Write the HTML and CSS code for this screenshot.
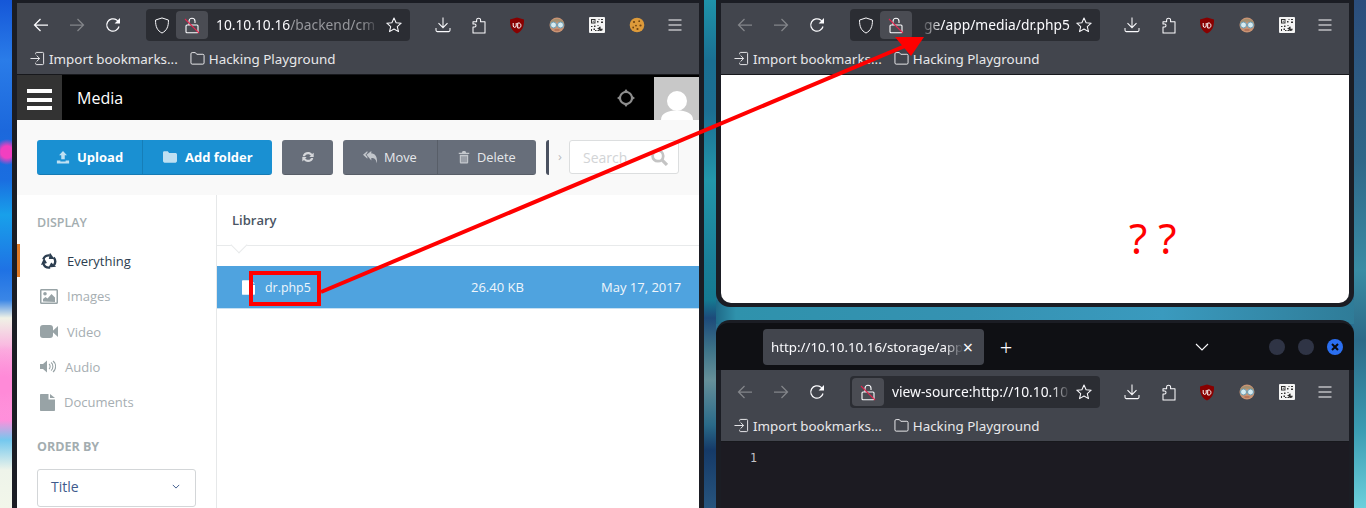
FILE: index.html
```html
<!DOCTYPE html>
<html lang="en">
<head>
<meta charset="utf-8">
<title>Media</title>
<link rel="stylesheet" href="styles.css">
</head>
<body>
<svg class="defs" aria-hidden="true">
  <symbol id="i-back" viewBox="0 0 16 16"><path d="M15 8H1.500M7.500 2 1.500 8l6 6" fill="none" stroke="currentColor" stroke-width="1.250"/></symbol>
  <symbol id="i-fwd" viewBox="0 0 16 16"><path d="M1 8h13.500M8.500 2l6 6-6 6" fill="none" stroke="currentColor" stroke-width="1.250"/></symbol>
  <symbol id="i-reload" viewBox="0 0 16 16"><path d="M14 9.500A6.200 6.200 0 1 1 11.800 3.100L14 5.200" fill="none" stroke="currentColor" stroke-width="1.250"/><path d="M15 1v5.400H9.600z" fill="currentColor"/></symbol>
  <symbol id="i-shield" viewBox="0 0 16 18"><path d="M8 1 14.800 3.200c.2 7-1.800 11.300-6.800 13.800C3 14.500 1 10.200 1.200 3.200z" fill="none" stroke="currentColor" stroke-width="1.050" stroke-linejoin="round"/></symbol>
  <symbol id="i-lock" viewBox="0 0 16 17"><path d="M5 8V4.200a3 3 0 0 1 6 0V6" fill="none" stroke="currentColor" stroke-width="1.100"/><rect x="2" y="8" width="12" height="7.800" rx="1" fill="none" stroke="currentColor" stroke-width="1.100"/><path d="M1 2 15 16" stroke="#e2264f" stroke-width="1.100"/></symbol>
  <symbol id="i-star" viewBox="0 0 16 16"><path d="m8 1 2.100 4.700 5.100.5-3.900 3.400 1.200 5L8 12l-4.500 2.600 1.200-5L.8 6.200l5.100-.5z" fill="none" stroke="currentColor" stroke-width="1.050" stroke-linejoin="round"/></symbol>
  <symbol id="i-dl" viewBox="0 0 16 16"><path d="M8 .5v10.200M3.500 6.200 8 10.700l4.500-4.500M1 11v2.300c0 .8.500 1.300 1.300 1.300h11.400c.8 0 1.300-.5 1.300-1.300V11" fill="none" stroke="currentColor" stroke-width="1.050"/></symbol>
  <symbol id="i-puzzle" viewBox="0 0 16 17"><path d="M2 16V10h1.800c1.600 0 1.600-3 0-3H2V4.800h3.600V3c0-2.400 4-2.400 4 0v1.800h4.400V16z" fill="none" stroke="currentColor" stroke-width="1.050" stroke-linejoin="round"/></symbol>
  <symbol id="i-menu" viewBox="0 0 16 16"><path d="M1.500 3h13M1.500 8h13M1.500 13h13" stroke="currentColor" stroke-width="1.100"/></symbol>
  <symbol id="i-import" viewBox="0 0 16 16"><path d="M6 3.500V2.500c0-.6.400-1 1-1h6.500c.6 0 1 .4 1 1v11c0 .6-.4 1-1 1H7c-.6 0-1-.4-1-1v-1" fill="none" stroke="currentColor" stroke-width="1"/><path d="M.5 8H10M7 4.800 10.300 8 7 11.200" fill="none" stroke="currentColor" stroke-width="1"/></symbol>
  <symbol id="i-folder" viewBox="0 0 16 16"><path d="M1 3c0-.8.500-1.300 1.300-1.300h3.400L7.200 3.500h6.500c.8 0 1.300.5 1.300 1.300v7.900c0 .8-.5 1.300-1.300 1.300H2.300C1.500 14 1 13.500 1 12.700z" fill="none" stroke="currentColor" stroke-width="1"/></symbol>
  <symbol id="i-ublock" viewBox="0 0 16 17"><path d="M8 .5 15 2.500c.3 7-1.800 11.500-7 14C2.800 14 .7 9.500 1 2.500z" fill="#800"/><path d="M4.200 6v3c0 1.800 3 1.800 3 0V6M8.700 6v5h1.200c2.700 0 2.700-5 0-5z" fill="none" stroke="#fff" stroke-width="1"/></symbol>
  <symbol id="i-face" viewBox="0 0 16 16"><circle cx="8" cy="8" r="7.500" fill="#c99373"/><path d="M.8 6.500C2 .5 14 .5 15.200 6.500 11 4 5 4 .8 6.500z" fill="#a39070"/><circle cx="4.500" cy="8" r="3" fill="#d6ecf2" stroke="#6a9cb2"/><circle cx="11.500" cy="8" r="3" fill="#d6ecf2" stroke="#6a9cb2"/><path d="M5.500 13h5" stroke="#a45f4a" stroke-width="1.100"/></symbol>
  <symbol id="i-qr" viewBox="0 0 16 16"><rect width="16" height="16" rx="1" fill="#f4f4f4"/><path d="M2 2h4.500v4.500H2zm1 1v2.500h2.500V3zM3.700 3.700h1.100v1.100H3.700zM9.500 2h1v1h-1zM12 2h2v1h-2zM12 4.500h2V6h-2zM8 4h1.500v1.500H8zM2 9h1.500v1H2zM5 8.500h1.500v1.500H5zM2 12h1v2H2zM4.500 11.500H6V13H4.500zM6 13h1.500v1H6zM8.500 8h1v1h-1zM8.500 11h1.500v1h-1.500zM8.500 13H10v1H8.500z" fill="#333" fill-rule="evenodd"/><path d="M13.800 11.800a2.200 2.200 0 1 1-2.200-2.200v2.200z" fill="#333"/></symbol>
  <symbol id="i-cookie" viewBox="0 0 16 16"><circle cx="8" cy="8" r="7.300" fill="#dd9a3a"/><g fill="#6e4312"><circle cx="5" cy="5" r="1.100"/><circle cx="10.200" cy="4.200" r=".9"/><circle cx="11.500" cy="8.500" r="1.100"/><circle cx="7" cy="8.600" r=".9"/><circle cx="4.200" cy="10.500" r=".9"/><circle cx="8.500" cy="12" r="1.100"/></g></symbol>
  <symbol id="i-upload" viewBox="0 0 16 16"><path d="M8 1 12.500 6H10v4.500H6V6H3.500zM1 12h4v1h6v-1h4v3.500H1z" fill="currentColor"/></symbol>
  <symbol id="i-ffolder" viewBox="0 0 16 14"><path d="M0 2.300C0 1 .8.500 1.800.500h3.700L7 2.500h7.200c1 0 1.800.7 1.800 1.700v7.500c0 1-.8 1.800-1.800 1.800H1.800C.8 13.500 0 12.700 0 11.700z" fill="currentColor"/></symbol>
  <symbol id="i-refresh" viewBox="0 0 16 16"><path d="M2 7C2.500 2.500 9.500.5 12.600 4.500L14.500 3v5H9.500l1.700-1.800C9.200 3.800 5 4.500 4.700 7zM14 9c-.5 4.500-7.500 6.500-10.600 2.500L1.500 13V8h5L4.800 9.800C6.800 12.200 11 11.500 11.300 9z" fill="currentColor"/></symbol>
  <symbol id="i-reply" viewBox="0 0 16 16"><path d="M5 1v2.200L2.800 5.500 5 7.800V10L0 5.500zM9.500 1v3C13.500 4 16 7 16 12.500c0 .8-.1 1.500-.3 2.500-.7-4.500-2.500-6-6.200-6v3L4 5.500z" fill="currentColor"/></symbol>
  <symbol id="i-trash" viewBox="0 0 16 16"><path d="M2 3h3.500L6.500 1h3l1 2H14v1.500H2zM3.200 5.500h9.600V14c0 1-.6 1.500-1.500 1.500H4.700c-.9 0-1.500-.5-1.500-1.500zm2 1.500v7h1V7zm2.300 0v7h1V7zm2.300 0v7h1V7z" fill="currentColor" fill-rule="evenodd"/></symbol>
  <symbol id="i-recycle" viewBox="0 0 18 18"><g id="rc-arm"><path d="M2.900 6.800A6.500 6.500 0 0 1 9.800 2.600" fill="none" stroke="currentColor" stroke-width="2.500"/><path d="M10 -.3 14.800 6.300 8.800 6.400z" fill="currentColor"/></g><use href="#rc-arm" transform="rotate(120 9 9)"/><use href="#rc-arm" transform="rotate(240 9 9)"/></symbol>
  <symbol id="i-image" viewBox="0 0 18 15"><path d="M0 1.500C0 .6.600 0 1.500 0h15c.9 0 1.500.6 1.500 1.500v12c0 .9-.6 1.500-1.500 1.500h-15C.6 15 0 14.400 0 13.500zm1.500 0v12h15v-12zM5 3a1.800 1.800 0 1 1 0 3.600A1.800 1.800 0 0 1 5 3zM3 12.500V10l2.500-2 2 1.500 4-4.500 3.500 3.500v4.500z" fill="currentColor" fill-rule="evenodd"/></symbol>
  <symbol id="i-video" viewBox="0 0 18 13"><rect width="13" height="13" rx="3" fill="currentColor"/><path d="M12 6.500 18 1v11z" fill="currentColor"/></symbol>
  <symbol id="i-audio" viewBox="0 0 16 14"><path d="M0 4.500h3L7 1v12L3 9.500H0z" fill="currentColor"/><path d="M9 4.500c1.500 1 1.500 4 0 5M11 3c2.500 1.500 2.500 6.500 0 8M13 1.500c3.500 2.500 3.500 8.500 0 11" fill="none" stroke="currentColor" stroke-width="1.100"/></symbol>
  <symbol id="i-doc" viewBox="0 0 15 17"><path d="M0 1C0 .4.400 0 1 0h7.500v5.500H15V16c0 .6-.4 1-1 1H1c-.6 0-1-.4-1-1zM10 0l5 4h-5z" fill="currentColor"/></symbol>
  <symbol id="i-search" viewBox="0 0 16 16"><circle cx="6.500" cy="6.500" r="5" fill="none" stroke="currentColor" stroke-width="2.600"/><path d="m10.500 10.500 4.500 4.500" stroke="currentColor" stroke-width="3"/></symbol>
  <symbol id="i-target" viewBox="0 0 18 18"><circle cx="9" cy="9" r="6" fill="none" stroke="currentColor" stroke-width="2.100"/><path d="M9 0l3 4H6zM9 18l3-4H6zM0 9l4-3v6zM18 9l-4-3v6z" fill="currentColor"/></symbol>
  <symbol id="i-person" viewBox="0 0 45 43"><circle cx="23" cy="24" r="10" fill="#fff"/><path d="M7 43c0-7 7-9.500 16-9.500S39 36 39 43z" fill="#fff"/></symbol>
</svg>

<main class="desktop">

  <section class="win win-left">
    <div class="toolbar">
      <div class="nav">
        <span class="tb"><svg class="ic16"><use href="#i-back"/></svg></span>
        <span class="tb dim"><svg class="ic16"><use href="#i-fwd"/></svg></span>
        <span class="tb"><svg class="ic16"><use href="#i-reload"/></svg></span>
        <div class="urlbar urlbar-left">
          <span class="shield"><svg class="ic-tall"><use href="#i-shield"/></svg></span>
          <span class="lockbox"><svg class="ic-tall"><use href="#i-lock"/></svg></span>
          <span class="url fade-end"><b>10.10.10.16</b><i>/backend/cm</i></span>
          <span class="star"><svg class="ic16"><use href="#i-star"/></svg></span>
        </div>
        <div class="exts">
          <span class="ext e-dl"><svg class="ic16"><use href="#i-dl"/></svg></span>
          <span class="ext e-pz"><svg class="ic-tall"><use href="#i-puzzle"/></svg></span>
          <span class="ext e-ub"><svg class="ic-tall"><use href="#i-ublock"/></svg></span>
          <span class="ext e-fc"><svg class="ic16"><use href="#i-face"/></svg></span>
          <span class="ext e-qr"><svg class="ic16"><use href="#i-qr"/></svg></span>
          <span class="ext e-ck"><svg class="ic16"><use href="#i-cookie"/></svg></span>
          <span class="ext e-mn"><svg class="ic16"><use href="#i-menu"/></svg></span>
        </div>
      </div>
      <div class="bookmarks">
        <svg class="ic15"><use href="#i-import"/></svg><span>Import bookmarks...</span>
        <svg class="ic15 bm-folder"><use href="#i-folder"/></svg><span>Hacking Playground</span>
      </div>
    </div>

    <div class="media">
      <header class="m-head">
        <span class="burger"><i></i><i></i><i></i></span>
        <h1 class="m-title">Media</h1>
        <svg class="m-target"><use href="#i-target"/></svg>
        <span class="avatar"><svg class="avatar-img"><use href="#i-person"/></svg></span>
      </header>

      <div class="m-tools">
        <div class="btn-group blue">
          <button class="btn b-upload"><svg class="bi"><use href="#i-upload"/></svg>Upload</button>
          <button class="btn b-folder"><svg class="bi"><use href="#i-ffolder"/></svg>Add folder</button>
        </div>
        <div class="btn-group gray"><button class="btn b-refresh"><svg class="bi"><use href="#i-refresh"/></svg></button></div>
        <div class="btn-group gray light">
          <button class="btn b-move"><svg class="bi"><use href="#i-reply"/></svg>Move</button>
          <button class="btn b-delete"><svg class="bi"><use href="#i-trash"/></svg>Delete</button>
        </div>
        <span class="sliver"></span>
        <span class="crumb">›</span>
        <div class="search"><span>Search</span><svg class="s-ic"><use href="#i-search"/></svg></div>
      </div>

      <div class="m-body">
        <aside class="side">
          <h2 class="side-h">DISPLAY</h2>
          <ul class="side-list">
            <li class="side-item active"><svg class="si si-18"><use href="#i-recycle"/></svg>Everything</li>
            <li class="side-item"><svg class="si si-18"><use href="#i-image"/></svg>Images</li>
            <li class="side-item"><svg class="si si-18"><use href="#i-video"/></svg>Video</li>
            <li class="side-item"><svg class="si si-16"><use href="#i-audio"/></svg>Audio</li>
            <li class="side-item"><svg class="si si-15"><use href="#i-doc"/></svg>Documents</li>
          </ul>
          <h2 class="side-h order">ORDER BY</h2>
          <div class="select"><span>Title</span><svg class="chev" viewBox="0 0 10 6"><path d="M1 1l4 4 4-4" fill="none" stroke="currentColor" stroke-width="1.200"/></svg></div>
        </aside>
        <section class="lib">
          <h2 class="lib-h">Library</h2>
          <div class="row">
            <svg class="row-doc"><use href="#i-doc"/></svg>
            <span class="row-name">dr.php5</span>
            <span class="row-size">26.40 KB</span>
            <span class="row-date">May 17, 2017</span>
          </div>
        </section>
      </div>
    </div>
  </section>

  <section class="win win-top">
    <div class="toolbar">
      <div class="nav">
        <span class="tb dim"><svg class="ic16"><use href="#i-back"/></svg></span>
        <span class="tb dim"><svg class="ic16"><use href="#i-fwd"/></svg></span>
        <span class="tb"><svg class="ic16"><use href="#i-reload"/></svg></span>
        <div class="urlbar">
          <span class="shield"><svg class="ic-tall"><use href="#i-shield"/></svg></span>
          <span class="lockbox"><svg class="ic-tall"><use href="#i-lock"/></svg></span>
          <span class="url url-end fade-start"><b>ge/app/media/dr.php5</b></span>
          <span class="star"><svg class="ic16"><use href="#i-star"/></svg></span>
        </div>
        <div class="exts">
          <span class="ext e-dl"><svg class="ic16"><use href="#i-dl"/></svg></span>
          <span class="ext e-pz"><svg class="ic-tall"><use href="#i-puzzle"/></svg></span>
          <span class="ext e-ub"><svg class="ic-tall"><use href="#i-ublock"/></svg></span>
          <span class="ext e-fc"><svg class="ic16"><use href="#i-face"/></svg></span>
          <span class="ext e-qr"><svg class="ic16"><use href="#i-qr"/></svg></span>
          <span class="ext e-mn"><svg class="ic16"><use href="#i-menu"/></svg></span>
        </div>
      </div>
      <div class="bookmarks">
        <svg class="ic15"><use href="#i-import"/></svg><span>Import bookmarks...</span>
        <svg class="ic15 bm-folder"><use href="#i-folder"/></svg><span>Hacking Playground</span>
      </div>
    </div>
    <div class="blank"></div>
  </section>

  <section class="win win-bottom">
    <div class="tabbar">
      <div class="tab"><span class="tab-title">http://10.10.10.16/storage/app</span><span class="tab-x">×</span></div>
      <span class="tab-new">+</span>
      <svg class="tab-list" viewBox="0 0 14 8"><path d="M1 1l6 6 6-6" fill="none" stroke="currentColor" stroke-width="1.100"/></svg>
      <span class="wbtn"></span><span class="wbtn"></span>
      <span class="wbtn close"><svg viewBox="0 0 10 10"><path d="M2 2l6 6M8 2l-6 6" stroke="#0a0a0a" stroke-width="2"/></svg></span>
    </div>
    <div class="toolbar">
      <div class="nav">
        <span class="tb dim"><svg class="ic16"><use href="#i-back"/></svg></span>
        <span class="tb dim"><svg class="ic16"><use href="#i-fwd"/></svg></span>
        <span class="tb"><svg class="ic16"><use href="#i-reload"/></svg></span>
        <div class="urlbar urlbar-src">
          <span class="lockbox"><svg class="ic-tall"><use href="#i-lock"/></svg></span>
          <span class="url fade-end"><b>view-source:http://10.10.10</b></span>
          <span class="star"><svg class="ic16"><use href="#i-star"/></svg></span>
        </div>
        <div class="exts">
          <span class="ext e-dl"><svg class="ic16"><use href="#i-dl"/></svg></span>
          <span class="ext e-pz"><svg class="ic-tall"><use href="#i-puzzle"/></svg></span>
          <span class="ext e-ub"><svg class="ic-tall"><use href="#i-ublock"/></svg></span>
          <span class="ext e-fc"><svg class="ic16"><use href="#i-face"/></svg></span>
          <span class="ext e-qr"><svg class="ic16"><use href="#i-qr"/></svg></span>
          <span class="ext e-mn"><svg class="ic16"><use href="#i-menu"/></svg></span>
        </div>
      </div>
      <div class="bookmarks">
        <svg class="ic15"><use href="#i-import"/></svg><span>Import bookmarks...</span>
        <svg class="ic15 bm-folder"><use href="#i-folder"/></svg><span>Hacking Playground</span>
      </div>
    </div>
    <div class="source"><span class="line-no">1</span></div>
  </section>

  <div class="qq">? ?</div>

  <svg class="marks" viewBox="0 0 1366 508" aria-hidden="true">
    <rect x="251" y="273" width="68" height="31" fill="none" stroke="#f00" stroke-width="4"/>
    <path d="M321 292 905 46" stroke="#f00" stroke-width="4"/>
    <path d="M924 37 895 37 911 56z" fill="#f00"/>
  </svg>
</main>
</body>
</html>
```

FILE: styles.css
```css
* { box-sizing: border-box; }
html, body { margin: 0; padding: 0; }
body { width: 1366px; height: 508px; overflow: hidden; font-family: "Noto Sans", sans-serif; }
.defs { position: absolute; width: 0; height: 0; }
h1, h2, ul { margin: 0; padding: 0; font: inherit; list-style: none; }
button { font: inherit; border: 0; color: inherit; background: none; padding: 0; }

.desktop {
  position: relative;
  width: 1366px;
  height: 508px;
  overflow: hidden;
  background-color: #2a6f90;
  background-image:
    radial-gradient(circle at 7px 152px, #f23fc0 0 6px, transparent 13px),
    radial-gradient(circle at 4px 385px, #ff8ad8 0 8px, transparent 40px),
    linear-gradient(180deg, #1557d8 0, #2a7ce8 60px, #1c68dc 130px, #1a6ee0 180px, #18a0ea 215px, #1f72e4 270px, #3a86e6 300px, #f0f2e6 318px, #fbb0e0 350px, #ff90dc 420px, #74c8ee 440px, #eef4ea 470px, #f2f6ea 508px),
    linear-gradient(180deg, #1f93aa 0, #1a6f92 60px, #1c6e92 110px, #2397aa 180px, #1a7f98 260px, #157a92 300px, #1d4a7a 318px, #3e7488 350px, #66909a 380px, #2a6a88 425px, #153a68 450px, #27557e 508px),
    linear-gradient(90deg, #1f6a88 0, #2f92ac 20px, #3592b2 40%, #3a9abe 70%, #2f7c98 100%),
    linear-gradient(180deg, #2b4d7c 0, #2f6788 160px, #3a8ca4 270px, #2c6a88 340px, #3b9cb2 430px, #6cd0dc 508px);
  background-repeat: no-repeat;
  background-position: 0 0, 0 0, 0 0, 704px 0, 716px 300px, 1354px 0;
  background-size: 12px 508px, 12px 508px, 12px 508px, 12px 508px, 638px 24px, 12px 508px;
}

/* windows on the desktop */
.win { position: absolute; background: #1b1d24; display: flex; flex-direction: column; }
.win-left { left: 12px; top: 0; width: 692px; height: 508px; padding: 3px 5px 0; }
.win-top { left: 716px; top: 0; width: 638px; height: 307px; padding: 3px 5px 4px; border-radius: 0 0 14px 14px; }
.win-bottom { left: 716px; top: 320px; width: 638px; height: 188px; padding: 3px 5px 0; border-radius: 14px 14px 0 0; }

/* browser chrome */
.toolbar { flex: none; height: 72px; background: #42454d; border-bottom: 1px solid #17181c; color: #fbfbfe; }
.nav { display: flex; align-items: center; height: 40px; padding: 4px 0 0 6px; }
.tb { width: 36px; height: 32px; display: flex; align-items: center; justify-content: center; flex: none; }
.tb.dim { color: #83858a; }
.ic16 { width: 16px; height: 16px; display: block; }
.ic-tall { width: 16px; height: 17px; display: block; }
.ic15 { width: 15px; height: 15px; display: block; flex: none; }
.urlbar { display: flex; align-items: center; width: 250px; height: 32px; margin-left: 15px; background: #2b2d33; border-radius: 4px; flex: none; }
.urlbar-left { width: 264px; }
.shield { width: 30px; padding-left: 8px; flex: none; }
.lockbox { width: 32px; height: 28px; background: #4a4c53; border-radius: 4px; display: flex; align-items: center; justify-content: center; flex: none; }
.urlbar-src .lockbox { margin-left: 2px; }
.url { flex: 1; min-width: 0; margin: 0 4px 0 8px; font-size: 13.8px; white-space: nowrap; overflow: hidden; display: flex; line-height: 20px; }
.url b { font-weight: 400; color: #fbfbfe; flex: none; }
.url i { font-style: normal; color: #96979c; flex: none; }
.url-end { justify-content: flex-end; }
.fade-end { -webkit-mask-image: linear-gradient(90deg, #000 calc(100% - 18px), transparent); mask-image: linear-gradient(90deg, #000 calc(100% - 18px), transparent); }
.fade-start { -webkit-mask-image: linear-gradient(90deg, transparent 0, #000 22px); mask-image: linear-gradient(90deg, transparent 0, #000 22px); }
.star { width: 20px; margin-right: 6px; padding-left: 2px; flex: none; }
.exts { display: flex; align-items: center; margin-left: 13px; flex: none; }
.ext { height: 32px; display: flex; align-items: center; justify-content: center; flex: none; }
.e-dl, .e-pz, .e-mn { width: 37px; }
.e-ub, .e-qr { width: 39px; }
.e-fc, .e-ck { width: 41px; }
.win-left .exts { margin-left: 15px; }
.win-left .e-dl, .win-left .e-pz, .win-left .e-mn { width: 36px; }
.win-left .e-ub, .win-left .e-fc, .win-left .e-qr, .win-left .e-ck { width: 40px; }
.bookmarks { display: flex; align-items: center; height: 31px; padding-left: 13px; font-size: 13.4px; color: #e8e8ea; }
.bookmarks svg { color: #f0f0f2; }
.bookmarks span { margin-left: 4px; }
.bm-folder { margin-left: 12px; }

/* media manager */
.media { flex: 1; min-height: 0; background: #fff; font-family: "Open Sans", sans-serif; overflow: hidden; display: flex; flex-direction: column; }
.m-head { display: flex; align-items: center; height: 45px; background: #000; flex: none; }
.burger { width: 45px; height: 45px; background: #333; display: flex; flex-direction: column; gap: 4.500px; padding: 14px 10px 0; flex: none; }
.burger i { display: block; height: 4px; background: #fff; }
.m-title { margin-left: 15px; color: #fff; font-size: 16px; font-weight: 400; }
.m-target { width: 18px; height: 18px; margin-left: auto; margin-right: 19px; color: #8d8d8d; }
.avatar { width: 45px; height: 43px; margin-top: 2px; background: #c8c8c8; flex: none; overflow: hidden; }
.avatar-img { width: 45px; height: 43px; display: block; }

.m-tools { display: flex; align-items: flex-start; height: 75px; padding: 20px 0 0 20px; background: #f9f9f9; flex: none; }
.btn-group { display: flex; height: 35px; border-radius: 3px; overflow: hidden; flex: none; margin-right: 10px; border-bottom: 1px solid rgba(0,0,0,.14); }
.btn { display: flex; align-items: center; height: 100%; flex: none; font-size: 13px; }
.blue { background: #1a90d2; color: #fff; font-weight: 700; }
.gray { background: #676e7a; color: #fff; }
.gray.light { color: #e6e8eb; }
.bi { width: 14px; height: 14px; flex: none; opacity: .72; }
.b-upload { width: 106px; padding-left: 19px; gap: 7px; border-right: 1px solid rgba(0,0,0,.12); }
.b-folder { width: 129px; padding-left: 20px; gap: 8px; }
.b-refresh { width: 51px; justify-content: center; }
.b-move { width: 95px; padding-left: 20px; gap: 7px; border-right: 1px solid rgba(0,0,0,.14); font-size: 12.8px; }
.b-delete { width: 98px; padding-left: 19px; gap: 6px; font-size: 12.8px; }
.sliver { width: 3px; height: 35px; background: #4a5160; border-radius: 3px 0 0 3px; flex: none; }
.crumb { width: 20px; height: 35px; padding-left: 9px; line-height: 33px; color: #b9bcc0; font-size: 13px; flex: none; }
.search { display: flex; align-items: center; width: 110px; height: 34px; padding-left: 13px; background: #fff; border: 1px solid #dcdedf; border-radius: 3px; color: #d2d4d6; font-size: 14px; flex: none; }
.s-ic { width: 17px; height: 17px; margin-left: auto; margin-right: 10px; color: #c4c4c4; }

.m-body { display: flex; flex: 1; min-height: 0; }
.side { width: 200px; flex: none; padding-top: 21px; border-right: 1px solid #e6e8e9; }
.side-h { height: 14px; line-height: 14px; padding-left: 20px; color: #a3adb0; font-size: 12.500px; font-weight: 600; }
.side-list { margin-top: 13.4px; }
.side-item { display: flex; align-items: center; gap: 9px; height: 35.250px; padding-left: 23px; font-size: 13px; color: #a6aeb2; }
.side-item.active { color: #2c3e50; background: linear-gradient(#e07b28, #e07b28) 0 1px / 3px 33px no-repeat; }
.si { height: 17px; flex: none; color: #98a3a6; }
.active .si { color: #2c3e50; }
.si-18 { width: 18px; }
.si-16 { width: 16px; }
.si-15 { width: 15px; }
.order { margin-top: 20px; font-weight: 700; }
.select { display: flex; align-items: center; justify-content: space-between; width: 159px; height: 38px; margin: 15px 0 0 20px; padding: 0 15px 2px 13px; border: 1px solid #d3d6d8; border-radius: 3px; color: #3e5a8c; font-size: 14px; }
.chev { width: 8px; height: 5px; }

.lib { flex: 1; min-width: 0; position: relative; }
.lib-h { height: 51px; padding: 17px 0 0 15px; line-height: 16px; border-bottom: 1px solid #e8eaeb; color: #4a5564; font-size: 13px; font-weight: 600; position: relative; }
.lib-h::after { content: ""; position: absolute; left: 16px; bottom: -6px; width: 11px; height: 11px; background: #fff; border-right: 1px solid #e8eaeb; border-bottom: 1px solid #e8eaeb; transform: rotate(45deg); }
.row { display: flex; align-items: center; height: 43px; margin-top: 20px; background: #4fa3df; border-bottom: 1px solid #c7e0f2; color: #f0f6fb; font-size: 13px; }
.row-doc { width: 13px; height: 17px; margin-left: 25px; color: #fff; flex: none; }
.row-name { flex: 1; margin-left: 10px; font-size: 12.4px; }
.row-size { width: 130px; }
.row-date { width: 81px; margin-right: 17px; white-space: nowrap; }

/* second and third windows */
.blank { flex: 1; background: #fff; border-radius: 0 0 10px 10px; }
.tabbar { display: flex; align-items: center; height: 47px; margin: 0 -5px; padding: 0 0 0 47px; background: #0f1014; border-radius: 12px 12px 0 0; flex: none; color: #fbfbfe; }
.tab { display: flex; align-items: center; width: 221px; height: 36px; padding: 0 8px; background: #42454d; border-radius: 4px; font-size: 13.3px; flex: none; }
.tab-title { flex: none; width: 192px; margin-right: -3px; white-space: nowrap; overflow: hidden; -webkit-mask-image: linear-gradient(90deg, #000 calc(100% - 18px), transparent); mask-image: linear-gradient(90deg, #000 calc(100% - 18px), transparent); }
.tab-x { width: 16px; text-align: center; font-size: 18px; line-height: 18px; flex: none; }
.tab-new { margin-left: 14px; width: 16px; font-size: 22px; font-weight: 300; line-height: 22px; text-align: center; }
.tab-list { width: 14px; height: 8px; margin-left: 181px; }
.wbtn { width: 16px; height: 16px; border-radius: 50%; background: #2f3445; margin-left: 13px; flex: none; }
.tab-list + .wbtn { margin-left: 60px; }
.wbtn.close { background: #2b6ff0; padding: 3px; }
.wbtn.close svg { display: block; width: 10px; height: 10px; }
.source { flex: 1; background: #1c1b22; padding: 3px 0 0 29px; }
.line-no { font-family: "DejaVu Sans Mono", monospace; font-size: 11.500px; color: #c4c4c8; }

/* annotations laid over the windows */
.qq { position: absolute; left: 1129px; top: 209px; color: #f00; font-size: 42px; line-height: 57px; font-family: "Noto Sans", sans-serif; }
.marks { position: absolute; left: 0; top: 0; width: 1366px; height: 508px; pointer-events: none; }
```
